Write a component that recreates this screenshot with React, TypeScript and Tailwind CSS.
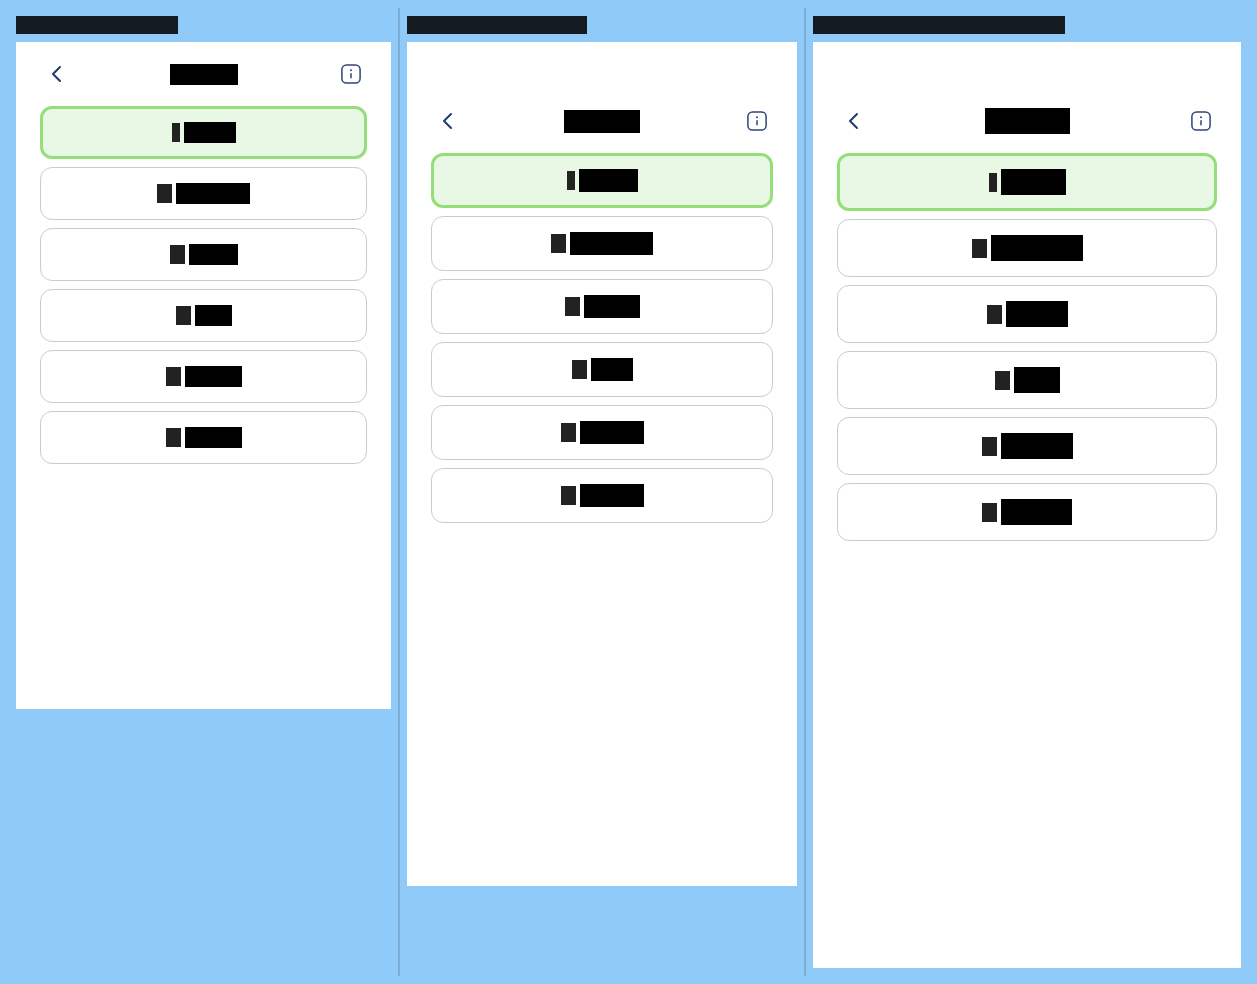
type Option = { prefix: string; name: string };

type Device = {
  id: string;
  caption: string;
  screen: string;
  title: string;
  line: string;
  options: Option[];
};

const devices: Device[] = [
  {
    id: "small",
    caption: "w-[162px]",
    screen: "aspect-[375/667]",
    title: "w-[68px]",
    line: "h-[21px]",
    options: [
      { prefix: "w-2", name: "w-[52px]" },
      { prefix: "w-[15px]", name: "w-[74px]" },
      { prefix: "w-[15px]", name: "w-[49px]" },
      { prefix: "w-[15px]", name: "w-[37px]" },
      { prefix: "w-[15px]", name: "w-[57px]" },
      { prefix: "w-[15px]", name: "w-[57px]" },
    ],
  },
  {
    id: "medium",
    caption: "w-[180px]",
    screen: "aspect-[390/844] pt-[47px]",
    title: "w-[76px]",
    line: "h-[23px]",
    options: [
      { prefix: "w-2", name: "w-[59px]" },
      { prefix: "w-[15px]", name: "w-[83px]" },
      { prefix: "w-[15px]", name: "w-[56px]" },
      { prefix: "w-[15px]", name: "w-[42px]" },
      { prefix: "w-[15px]", name: "w-[64px]" },
      { prefix: "w-[15px]", name: "w-[64px]" },
    ],
  },
  {
    id: "large",
    caption: "w-[252px]",
    screen: "aspect-[428/926] pt-[47px]",
    title: "w-[85px]",
    line: "h-[26px]",
    options: [
      { prefix: "w-2", name: "w-[65px]" },
      { prefix: "w-[15px]", name: "w-[92px]" },
      { prefix: "w-[15px]", name: "w-[62px]" },
      { prefix: "w-[15px]", name: "w-[46px]" },
      { prefix: "w-[15px]", name: "w-[72px]" },
      { prefix: "w-[15px]", name: "w-[71px]" },
    ],
  },
];

function BackIcon() {
  return (
    <svg viewBox="0 0 24 24" className="size-6" fill="none" stroke="currentColor" strokeWidth="2" strokeLinecap="round" strokeLinejoin="round" aria-hidden="true">
      <path d="M16 5 9 12l7 7" />
    </svg>
  );
}

function InfoIcon() {
  return (
    <svg viewBox="0 0 24 24" className="size-6" fill="none" stroke="currentColor" strokeWidth="1.5" strokeLinecap="round" aria-hidden="true">
      <rect x="2.9" y="2.9" width="18.2" height="18.2" rx="4.6" />
      <path d="M12 11.7v4.1" />
      <circle cx="12" cy="8.2" r="1" fill="currentColor" stroke="none" />
    </svg>
  );
}

function OptionButton({ option, line, selected, label }: { option: Option; line: string; selected: boolean; label: string }) {
  return (
    <button
      type="button"
      aria-label={label}
      aria-pressed={selected}
      className={`flex w-full items-center justify-center gap-1 rounded-xl ${
        selected ? "border-3 border-[#95df7b] bg-[#e9f8e5] py-[13px]" : "border border-[#cccccc] bg-white py-[15px]"
      }`}
    >
      <span className={`h-[19px] bg-[#222222] ${option.prefix}`} />
      <span className={`bg-black ${line} ${option.name}`} />
    </button>
  );
}

function Preview({ device }: { device: Device }) {
  return (
    <section className="flex min-w-0 flex-col gap-2">
      <div className={`h-[18px] max-w-full bg-[#141b22] ${device.caption}`} />
      <div className={`bg-white px-6 ${device.screen}`}>
        <header className="flex h-16 items-center justify-between">
          <button type="button" aria-label="Back" className="grid size-8 place-items-center text-[#233a70]">
            <BackIcon />
          </button>
          <div className={`bg-black ${device.line} ${device.title}`} />
          <button type="button" aria-label="Information" className="grid size-8 place-items-center text-[#2f4477]">
            <InfoIcon />
          </button>
        </header>
        <div className="flex flex-col gap-2">
          {device.options.map((option, index) => (
            <OptionButton key={index} option={option} line={device.line} selected={index === 0} label={`Option ${index + 1}`} />
          ))}
        </div>
      </div>
    </section>
  );
}

function Divider() {
  return <div className="-my-2 bg-black/15" />;
}

export default function App() {
  return (
    <main className="grid min-h-screen grid-cols-[375fr_2px_390fr_2px_428fr] gap-x-[7px] bg-[#90caf9] p-4 font-['Liberation_Sans',sans-serif]">
      <Preview device={devices[0]} />
      <Divider />
      <Preview device={devices[1]} />
      <Divider />
      <Preview device={devices[2]} />
    </main>
  );
}
